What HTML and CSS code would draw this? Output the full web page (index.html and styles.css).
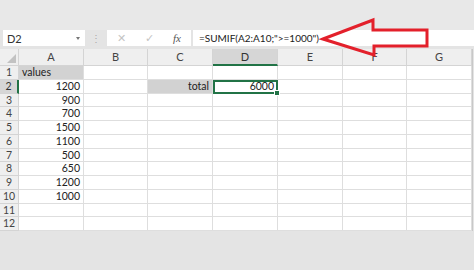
FILE: index.html
```html
<!DOCTYPE html>
<html lang="en">

<head>
    <meta charset="UTF-8">
    <title>SUMIF</title>
    <link rel="stylesheet" href="styles.css">
</head>

<body>

    <div class="app">
        <div class="ribbon"></div>

        <div class="formula-bar">
            <div class="name-box">
                <span>D2</span>
                <span class="drop"></span>
            </div>
            <div class="grip">⋮</div>
            <div class="fx-box">
                <span class="fx-btn">✕</span>
                <span class="fx-btn">✓</span>
                <span class="fx-btn fx">fx</span>
            </div>
            <div class="formula">=SUMIF(A2:A10;"&gt;=1000")</div>
        </div>

        <div class="sheet" id="sheet"></div>

        <svg class="callout" width="474" height="70" viewBox="0 0 474 70">
            <polygon points="323,39 373,20 373,30 427,30 427,46 374,46 374,55"
                fill="none" stroke="#e3202b" stroke-width="3" stroke-linejoin="miter" />
        </svg>
    </div>

    <script>
        const cols = ['A', 'B', 'C', 'D', 'E', 'F', 'G'];
        const cells = {
            A1: { text: 'values', cls: 'shade left' },
            A2: { text: '1200' }, A3: { text: '900' }, A4: { text: '700' },
            A5: { text: '1500' }, A6: { text: '1100' }, A7: { text: '500' },
            A8: { text: '650' }, A9: { text: '1200' }, A10: { text: '1000' },
            C2: { text: 'total', cls: 'shade' },
            D2: { text: '6000', cls: 'active' }
        };

        const sheet = document.getElementById('sheet');
        let html = '<div class="corner"></div>';
        cols.forEach(c => {
            html += `<div class="col-head${c === 'D' ? ' sel' : ''}">${c}</div>`;
        });
        for (let r = 1; r <= 12; r++) {
            html += `<div class="row-head${r === 2 ? ' sel' : ''}">${r}</div>`;
            cols.forEach(c => {
                const cell = cells[c + r];
                if (cell) {
                    html += `<div class="cell ${cell.cls || ''}">${cell.text}</div>`;
                } else {
                    html += '<div class="cell"></div>';
                }
            });
        }
        sheet.innerHTML = html;
    </script>

</body>

</html>
```

FILE: styles.css
```css
body {
    margin: 0;
    background-color: #e4e4e4;
    font-family: Lato, "Liberation Sans", sans-serif;
    color: #222;
}

.app {
    position: relative;
    width: 474px;
    height: 270px;
    overflow: hidden;
}

.ribbon {
    height: 30px;
    background-color: #e8e8e8;
}

.formula-bar {
    display: flex;
    align-items: center;
    height: 16px;
    padding: 0 0 0 3px;
    margin-bottom: 3px;
}

.name-box {
    display: flex;
    align-items: center;
    justify-content: space-between;
    width: 73px;
    height: 16px;
    padding: 0 5px 0 4px;
    background-color: white;
    font-size: 11px;
    color: #333;
}

.drop {
    width: 0;
    height: 0;
    border-left: 2px solid transparent;
    border-right: 2px solid transparent;
    border-top: 3px solid #777;
}

.grip {
    width: 22px;
    text-align: center;
    color: #aaa;
    font-size: 10px;
}

.fx-box {
    display: flex;
    align-items: center;
    justify-content: space-around;
    width: 84px;
    height: 16px;
    background-color: white;
    margin-right: 2px;
}

.fx-btn {
    width: 28px;
    text-align: center;
    font-size: 11px;
    color: #c4c4c4;
}

.fx {
    font-family: "Liberation Serif", serif;
    font-style: italic;
    color: #555;
}

.formula {
    flex: 1;
    height: 16px;
    line-height: 16px;
    padding-left: 6px;
    background-color: white;
    font-size: 10px;
    color: #222;
}

.sheet {
    display: grid;
    grid-template-columns: 19px 65px 64px 65px 65px 65px 64px 65px;
    grid-template-rows: 17px;
    grid-auto-rows: 13.75px;
    width: 472px;
    background-color: white;
    border-right: 1px solid #c8c8c8;
    font-size: 10.5px;
}

.corner,
.col-head,
.row-head {
    background-color: #efefef;
    color: #444;
    border-right: 1px solid #d4d4d4;
    border-bottom: 1px solid #d4d4d4;
}

.corner {
    position: relative;
}

.corner::after {
    content: "";
    position: absolute;
    right: 2px;
    bottom: 2px;
    border-left: 9px solid transparent;
    border-bottom: 9px solid #c2c2c2;
}

.col-head {
    text-align: center;
    line-height: 16px;
    font-size: 11px;
}

.col-head.sel {
    background-color: #d6d6d6;
    border-bottom: 2px solid #217346;
    color: #333;
}

.row-head {
    text-align: center;
    line-height: 13px;
    font-size: 10.5px;
}

.row-head.sel {
    background-color: #d6d6d6;
    border-right: 2px solid #217346;
    color: #333;
}

.cell {
    border-right: 1px solid #dedede;
    border-bottom: 1px solid #dedede;
    text-align: right;
    line-height: 13px;
    padding: 0 3px;
    white-space: nowrap;
}

.cell.left {
    text-align: left;
}

.cell.shade {
    background-color: #d2d2d2;
}

.cell.active {
    position: relative;
    display: flex;
    align-items: center;
    justify-content: flex-end;
    border: 2px solid #217346;
    padding: 0 2px;
}

.cell.active::after {
    content: "";
    position: absolute;
    right: -4px;
    bottom: -4px;
    width: 4px;
    height: 4px;
    background-color: #217346;
    border: 1px solid white;
}

.callout {
    position: absolute;
    left: 0;
    top: 0;
}
```
